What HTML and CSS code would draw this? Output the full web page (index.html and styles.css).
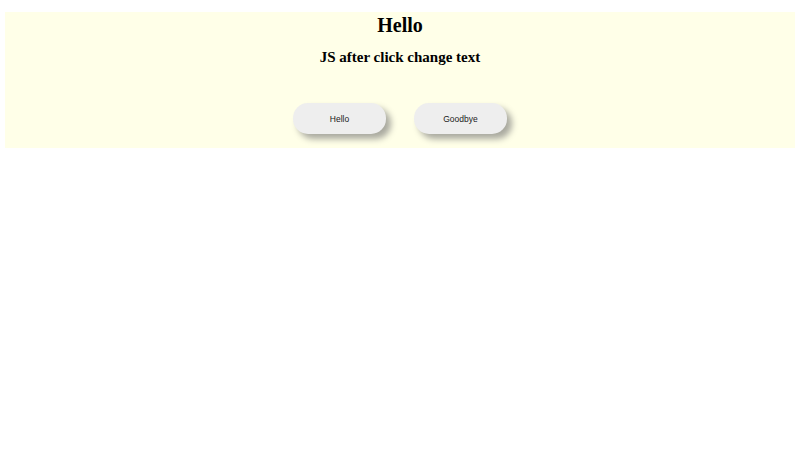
FILE: index.html
```html
<!DOCTYPE html>
<html>
<head>
<meta charset="utf-8">
<link rel="stylesheet" href="styles.css">
</head>
<body>
<div class="box">
  <h2 class="title">Hello</h2>
  <h3 class="subtitle">JS after click change text</h3>
  <div class="buttons">
    <button class="btn">Hello</button>
    <button class="btn">Goodbye</button>
  </div>
</div>
</body>
</html>
```
FILE: styles.css
```css
body {
  margin: 0;
  font-family: "Liberation Serif", "Times New Roman", serif;
  background: #ffffff;
}
.box {
  margin: 12px 5px 0;
  padding: 2px 0 14px;
  background: #ffffe8;
  text-align: center;
}
.title {
  margin: 0;
  font-size: 20px;
  line-height: 22px;
  font-weight: bold;
}
.subtitle {
  margin: 12px 0 0;
  font-size: 15px;
  line-height: 18px;
  font-weight: bold;
}
.buttons {
  display: flex;
  justify-content: center;
  gap: 28px;
  margin-top: 37px;
}
.btn {
  width: 93px;
  height: 31px;
  border: none;
  border-radius: 15px;
  background: #eeeeee;
  box-shadow: 5px 5px 6px #aaaaa0;
  font-family: "Liberation Sans", Arial, sans-serif;
  font-size: 8.5px;
  color: #1a1a1a;
  padding: 0;
}
```
